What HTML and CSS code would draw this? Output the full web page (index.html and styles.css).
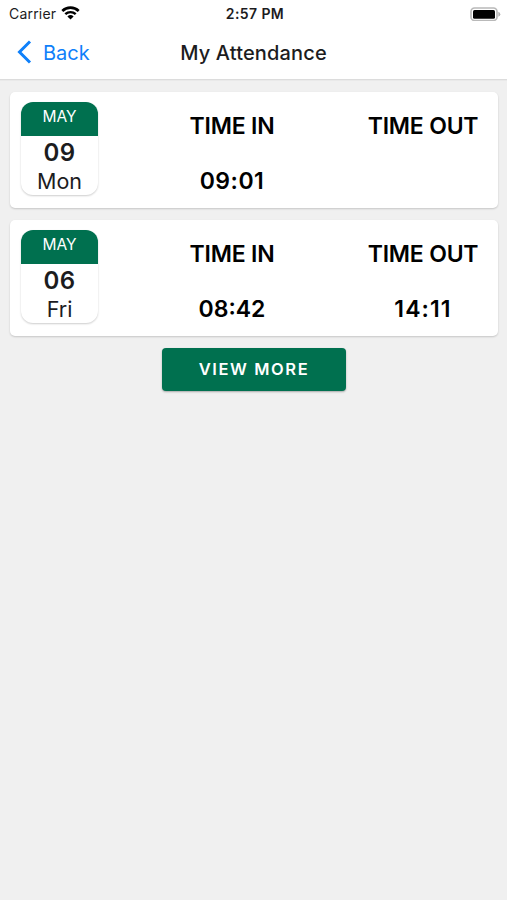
FILE: index.html
```html
<!DOCTYPE html>
<html lang="en">
<head>
<meta charset="utf-8">
<title>My Attendance</title>
<link rel="stylesheet" href="styles.css">
</head>
<body>
<header class="header">
  <div class="status">
    <div class="carrier"><span>Carrier</span>
      <svg class="wifi" width="19" height="14" viewBox="0 0 19 14"><path d="M1.300 5a11.800 11.800 0 0 1 16.400 0" fill="none" stroke="#000" stroke-width="2.700"/><path d="M4.300 8.200a7.500 7.500 0 0 1 10.400 0" fill="none" stroke="#000" stroke-width="2.400"/><path d="M9.500 13.600l-3.100-3.100a4.500 4.500 0 0 1 6.200 0z"/></svg>
    </div>
    <div class="clock">2:57 PM</div>
    <svg class="battery" width="31" height="14" viewBox="0 0 31 14"><rect x="1" y="1" width="26" height="12.500" rx="3.500" fill="#fff" stroke="#b9b9b9" stroke-width="1.700"/><rect x="3" y="3" width="22" height="8.800" rx="1.500"/><path d="M28.300 4.800v5q2-.7 2-2.500t-2-2.500z" fill="#b0b0b0"/></svg>
  </div>
  <nav class="nav">
    <div class="back"><svg width="15" height="24" viewBox="0 0 15 24"><path d="M13 1.500L2.500 12 13 22.500" fill="none" stroke="#0f80fa" stroke-width="3"/></svg><span>Back</span></div>
    <h1 class="title">My Attendance</h1>
  </nav>
</header>
<main class="list">
  <section class="card">
    <div class="date"><div class="month">MAY</div><div class="day">09</div><div class="weekday">Mon</div></div>
    <div class="time time-in"><span class="label">TIME IN</span><span class="spaced">09:01</span></div>
    <div class="time time-out"><span class="label">TIME OUT</span></div>
  </section>
  <section class="card">
    <div class="date"><div class="month">MAY</div><div class="day">06</div><div class="weekday">Fri</div></div>
    <div class="time time-in"><span class="label">TIME IN</span><span>08:42</span></div>
    <div class="time time-out"><span class="label">TIME OUT</span><span class="spaced wide">14:11</span></div>
  </section>
  <button class="more">VIEW MORE</button>
</main>
</body>
</html>
```
FILE: styles.css
```css
* { box-sizing: border-box; }
body { margin: 0; min-height: 900px; background: #f0f0f0; color: #1c1c1e; font-family: Inter, sans-serif; }
.header { height: 80px; background: #fff; border-bottom: 1px solid #dcdcdc; box-shadow: 0 1px 0 #e9e9e9; }
.status { height: 27px; padding: 0 6px 0 9px; display: grid; grid-template-columns: 1fr auto 1fr; align-items: center; font-size: 14px; color: #1c1c1e; }
.carrier { display: flex; align-items: center; gap: 6px; letter-spacing: .2px; }
.wifi { margin-top: -2px; margin-left: -1px; }
.clock { font-size: 14px; font-weight: 600; letter-spacing: .4px; }
.battery { justify-self: end; }
.nav { height: 52px; padding: 0 17px; display: grid; grid-template-columns: 1fr auto 1fr; align-items: center; }
.back { display: flex; align-items: center; gap: 11px; color: #0f80fa; font-size: 20px; }
.back svg { margin-top: -2px; }
.title { margin: 0; font-size: 20px; font-weight: 550; letter-spacing: .15px; }
.list { display: flex; flex-direction: column; align-items: center; gap: 12px; padding: 12px 9px 0 10px; }
.card { width: 100%; height: 116px; padding: 10px 11px; display: grid; grid-template-columns: 77px 1fr 130px; background: #fff; border-radius: 5px; box-shadow: 0 1px 2px rgba(0,0,0,.18); }
.date { height: 93px; text-align: center; border-radius: 12px; overflow: hidden; box-shadow: 0 1px 2px rgba(0,0,0,.2); }
.month { height: 34px; line-height: 29px; background: #00704f; color: #fff; font-size: 15.5px; }
.day { height: 31px; line-height: 34px; font-size: 24px; font-weight: 600; letter-spacing: .3px; }
.weekday { line-height: 28px; font-size: 21.5px; }
.time { display: flex; flex-direction: column; align-items: center; gap: 27px; padding-top: 10px; color: #000; font-size: 23px; font-weight: 600; line-height: 28px; }
.time-in { padding-left: 9px; }
.time-out { width: 110px; justify-self: end; margin-right: 9px; white-space: nowrap; }
.label { letter-spacing: -.2px; }
.spaced { letter-spacing: .5px; }
.wide { letter-spacing: 1.1px; }
.more { width: 184px; height: 43px; padding: 0 0 1px; border: 0; border-radius: 4px; background: #00704f; color: #fff; font: 600 16.5px Inter, sans-serif; letter-spacing: 1.6px; box-shadow: 0 1px 2px rgba(0,0,0,.3); }
```
